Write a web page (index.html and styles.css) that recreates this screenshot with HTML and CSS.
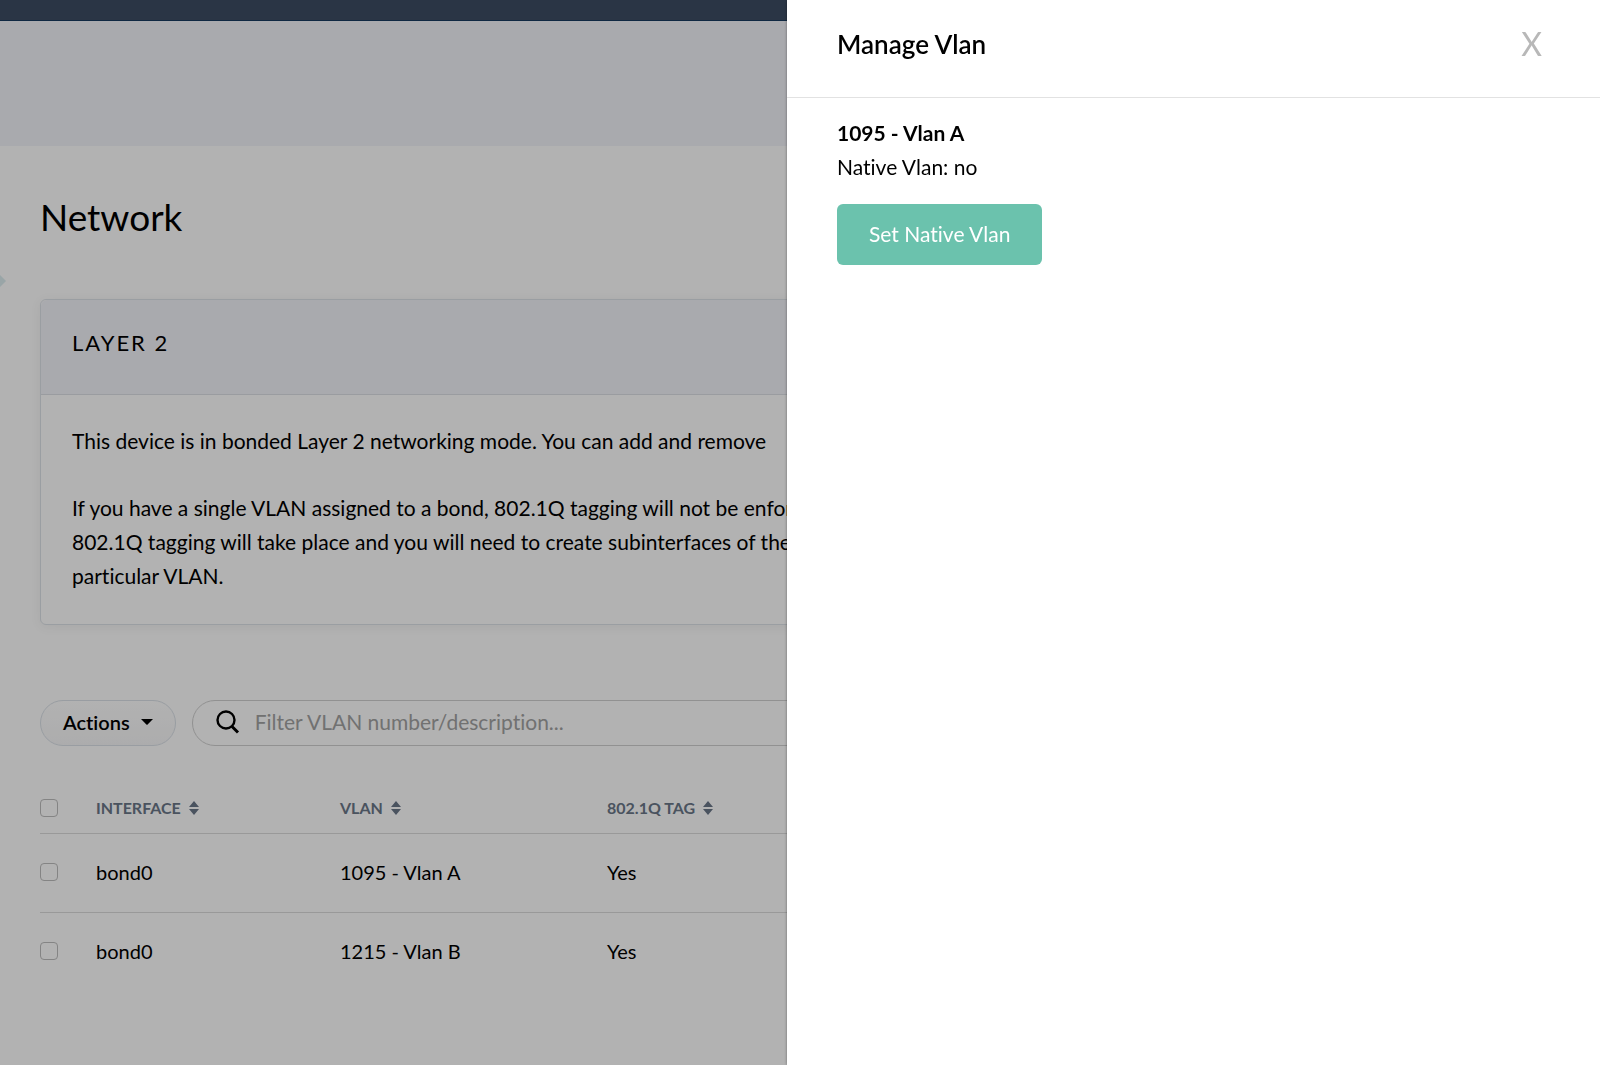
FILE: index.html
```html
<!DOCTYPE html>
<html lang="en">
<head>
<meta charset="utf-8">
<meta name="viewport" content="width=device-width, initial-scale=1">
<title>Network</title>
<link rel="stylesheet" href="styles.css">
</head>
<body>
<div class="page">
  <header class="topbar"></header>
  <div class="subnav"></div>
  <span class="nav-pointer"></span>
  <main class="content">
    <h1 class="title">Network</h1>

    <section class="card">
      <h2 class="card-head">LAYER 2</h2>
      <div class="card-body">
        <p>This device is in bonded Layer 2 networking mode. You can add and remove</p>
        <p>If you have a single VLAN assigned to a bond, 802.1Q tagging will not be enforced<br>802.1Q tagging will take place and you will need to create subinterfaces of the<br>particular VLAN.</p>
      </div>
    </section>

    <div class="toolbar">
      <button class="actions" type="button">Actions
        <svg width="12" height="6" viewBox="0 0 12 6" aria-hidden="true"><path d="M0 0h12L6.600 5.600q-.6.5-1.200 0z" fill="currentColor"/></svg>
      </button>
      <label class="search">
        <svg width="24" height="24" viewBox="0 0 24 24" fill="none" stroke="#000" aria-hidden="true"><circle cx="10" cy="10" r="8.500" stroke-width="2.400"/><path d="M16 16.500l6 6" stroke-width="3"/></svg>
        <input type="text" placeholder="Filter VLAN number/description..." aria-label="Filter VLAN number or description">
      </label>
    </div>

    <table class="vlans">
      <thead>
        <tr>
          <th class="col-check"><input type="checkbox" aria-label="Select all"></th>
          <th class="col-interface"><span class="sort">INTERFACE <svg width="10" height="14" viewBox="0 0 10 14" aria-hidden="true"><path d="M5 0l5 6H0zM5 14l5-6H0z" fill="currentColor"/></svg></span></th>
          <th class="col-vlan"><span class="sort">VLAN <svg width="10" height="14" viewBox="0 0 10 14" aria-hidden="true"><path d="M5 0l5 6H0zM5 14l5-6H0z" fill="currentColor"/></svg></span></th>
          <th><span class="sort">802.1Q TAG <svg width="10" height="14" viewBox="0 0 10 14" aria-hidden="true"><path d="M5 0l5 6H0zM5 14l5-6H0z" fill="currentColor"/></svg></span></th>
        </tr>
      </thead>
      <tbody>
        <tr>
          <td><input type="checkbox" aria-label="Select 1095 - Vlan A"></td>
          <td>bond0</td>
          <td>1095 - Vlan A</td>
          <td>Yes</td>
        </tr>
        <tr>
          <td><input type="checkbox" aria-label="Select 1215 - Vlan B"></td>
          <td>bond0</td>
          <td>1215 - Vlan B</td>
          <td>Yes</td>
        </tr>
      </tbody>
    </table>
  </main>
</div>

<div class="backdrop"></div>
<aside class="drawer" role="dialog" aria-labelledby="drawer-title">
  <header class="drawer-head">
    <h2 id="drawer-title">Manage Vlan</h2>
    <button class="close" type="button" aria-label="Close">X</button>
  </header>
  <div class="drawer-body">
    <p class="vlan-name">1095 - Vlan A</p>
    <p>Native Vlan: no</p>
    <button class="primary" type="button">Set Native Vlan</button>
  </div>
</aside>
</body>
</html>
```
FILE: styles.css
```css
* {
  box-sizing: border-box;
}

body {
  margin: 0;
  background: #fff;
  color: #000;
  font: 21px/34px Lato, "Liberation Sans", sans-serif;
  font-variant-ligatures: none;
}

h1, h2, p {
  margin: 0;
}

button, input {
  font: inherit;
  font-variant-ligatures: none;
}

.page {
  position: relative;
  min-height: 100vh;
  overflow: hidden;
}

.topbar {
  height: 21px;
  background: #3d4d64;
  border-bottom: 1px solid #163a5f;
}

.subnav {
  height: 125px;
  background: #f3f4fa;
}

/* Tip of the active entry in the off-screen side menu */
.nav-pointer {
  position: absolute;
  top: 275px;
  left: 0;
  width: 6px;
  height: 12px;
  background: #dcecf0;
  clip-path: polygon(0 0, 100% 50%, 0 100%);
}

.content {
  padding: 47px 40px;
}

.title {
  font-size: 37px;
  font-weight: 400;
  line-height: 48px;
}

.card {
  margin-top: 58px;
  border: 1px solid #dde2e8;
  border-radius: 6px;
  box-shadow: 0 2px 12px rgba(0, 0, 0, .06);
}

.card-head {
  height: 95px;
  padding: 26px 31px;
  background: #f3f4fa;
  border-bottom: 1px solid #dde0e6;
  border-radius: 6px 6px 0 0;
  font-size: 22px;
  font-weight: 400;
  letter-spacing: 2px;
}

.card-body {
  padding: 29px 31px 31px;
  white-space: nowrap;
}

.card-body p + p {
  margin-top: 33px;
}

.toolbar {
  display: flex;
  gap: 16px;
  margin-top: 75px;
}

.actions {
  display: flex;
  align-items: center;
  gap: 11px;
  height: 46px;
  padding: 0 22px 2px;
  border: 1px solid #dbe1e8;
  border-radius: 23px;
  background: linear-gradient(#fff, #f7f7f8);
  color: #000;
  font-size: 20px;
  font-weight: 600;
}

.search {
  display: flex;
  flex: 1;
  align-items: center;
  gap: 15px;
  height: 46px;
  padding: 0 23px 2px;
  border: 1px solid #d0d0d0;
  border-radius: 23px;
}

.search input {
  flex: 1;
  padding: 0;
  border: 0;
  outline: 0;
  background: none;
}

.search input::placeholder {
  color: #a3a3a3;
  opacity: 1;
}

.vlans {
  width: 100%;
  margin-top: 38px;
  border-collapse: collapse;
  table-layout: fixed;
  text-align: left;
}

.vlans th, .vlans td {
  padding: 0;
}

.vlans th {
  height: 49px;
  color: #6b7789;
  font-size: 16px;
  font-weight: 700;
}

.vlans td {
  height: 79px;
  padding-bottom: 2px;
  border-top: 1px solid #dcdcdc;
  font-size: 20px;
}

.col-check {
  width: 56px;
}

.col-interface {
  width: 244px;
}

.col-vlan {
  width: 267px;
}

.sort {
  display: inline-flex;
  align-items: center;
  gap: 8px;
}

input[type="checkbox"] {
  display: block;
  width: 18px;
  height: 18px;
  margin: 0;
  border: 1px solid #bdbdbd;
  border-radius: 4px;
  appearance: none;
}

.backdrop {
  position: fixed;
  inset: 0;
  background: rgba(0, 0, 0, .3);
}

.drawer {
  position: fixed;
  top: 0;
  right: 0;
  bottom: 0;
  width: calc(50% + 13px);
  background: #fff;
  box-shadow: 0 0 3px rgba(0, 0, 0, .4);
}

.drawer-head {
  display: flex;
  align-items: center;
  justify-content: space-between;
  height: 98px;
  padding: 0 58px 9px 50px;
  border-bottom: 1px solid #e2e2e2;
}

.drawer-head h2 {
  font-size: 26px;
  font-weight: 600;
}

.close {
  padding: 0;
  border: 0;
  background: none;
  color: #b8b8b8;
  font-size: 32px;
  font-weight: 400;
}

.drawer-body {
  padding: 18px 50px;
}

.vlan-name {
  font-weight: 700;
}

.primary {
  height: 61px;
  margin-top: 20px;
  padding: 0 32px 2px;
  border: 0;
  border-radius: 6px;
  background: #6bc2ad;
  color: #fff;
}
```
